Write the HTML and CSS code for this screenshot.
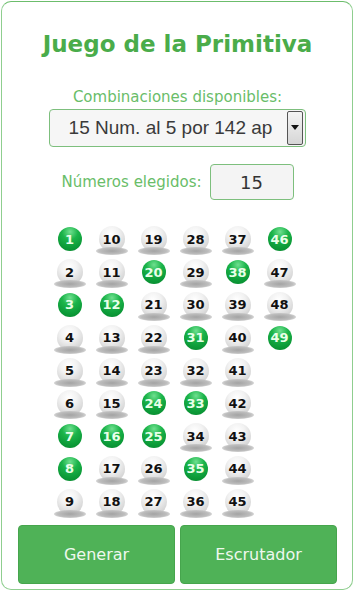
FILE: index.html
```html
<!DOCTYPE html>
<html lang="es">
<head>
    <meta charset="UTF-8">
    <meta name="viewport" content="width=device-width, initial-scale=1.0">
    <title>Juego de la Primitiva</title>
    <link rel="stylesheet" href="styles.css">
</head>
<body>
    <div class="card">
        <h1>Juego de la Primitiva</h1>
        <div class="label">Combinaciones disponibles:</div>
        <div class="select">
            <span class="select-text">15 Num. al 5 por 142 ap</span>
            <span class="select-arrow"></span>
        </div>
        <div class="chosen">
            <span class="label">Números elegidos:</span>
            <div class="count">15</div>
        </div>
        <div class="balls" id="balls"></div>
        <div class="actions">
            <button>Generar</button>
            <button>Escrutador</button>
        </div>
    </div>

    <script>
        const picked = [1, 3, 7, 8, 12, 16, 20, 24, 25, 31, 33, 35, 38, 46, 49];
        const box = document.getElementById('balls');
        let html = '';
        for (let n = 1; n <= 49; n++) {
            const cls = picked.includes(n) ? 'ball on' : 'ball';
            html += `<div class="cell"><span class="${cls}">${n}</span></div>`;
        }
        box.innerHTML = html;
    </script>
</body>
</html>
```

FILE: styles.css
```css
body {
    margin: 0;
    padding: 0;
    background-color: #fff;
    font-family: "DejaVu Sans", Verdana, sans-serif;
}
.card {
    margin: 1px;
    width: 352px;
    height: 589px;
    box-sizing: border-box;
    border: 1px solid #8fce8f;
    border-top-color: #6cbd6c;
    border-radius: 10px;
    padding: 28px 15px 0 16px;
    display: flex;
    flex-direction: column;
    align-items: center;
}
h1 {
    margin: 0;
    font-size: 23px;
    line-height: 28px;
    color: #4aac4a;
    font-weight: bold;
}
.label {
    color: #69bd69;
    font-size: 15px;
    line-height: 18px;
}
.card > .label {
    margin-top: 30px;
}
.select {
    margin-top: 3px;
    width: 257px;
    height: 38px;
    box-sizing: border-box;
    border: 1px solid #7dbf7d;
    border-radius: 4px;
    background-color: #f6f6f6;
    display: flex;
    align-items: center;
    padding: 0 2px 0 0;
}
.select-text {
    flex: 1;
    text-align: center;
    font-family: "Liberation Sans", Arial, sans-serif;
    font-size: 19px;
    color: #3a3a3a;
    padding-left: 4px;
}
.select-arrow {
    width: 16px;
    height: 34px;
    box-sizing: border-box;
    border: 1px solid #555;
    border-radius: 2px;
    background: linear-gradient(#f4f4f4, #d6d6d6);
    position: relative;
}
.select-arrow::after {
    content: "";
    position: absolute;
    left: 3px;
    top: 13px;
    border-left: 4px solid transparent;
    border-right: 4px solid transparent;
    border-top: 5px solid #111;
}
.chosen {
    margin-top: 17px;
    display: flex;
    align-items: center;
    gap: 8px;
}
.count {
    width: 84px;
    height: 36px;
    box-sizing: border-box;
    border: 1px solid #7dbf7d;
    border-radius: 4px;
    background-color: #f4f4f4;
    display: flex;
    align-items: center;
    justify-content: center;
    font-size: 18px;
    color: #333;
}
.balls {
    margin-top: 23px;
    display: grid;
    grid-auto-flow: column;
    grid-template-rows: repeat(9, 32.8px);
    grid-template-columns: repeat(6, 42px);
    margin-left: -6px;
}
.cell {
    display: flex;
    align-items: center;
    justify-content: center;
}
.ball {
    position: relative;
    width: 26px;
    height: 26px;
    border-radius: 50%;
    display: flex;
    align-items: center;
    justify-content: center;
    font-size: 13px;
    font-weight: bold;
    color: #111;
    background: radial-gradient(circle at 45% 30%, #ffffff 0%, #f2f2f2 35%, #d4d4d4 75%, #b5b5b5 100%);
    z-index: 1;
}
.ball::before {
    content: "";
    position: absolute;
    left: -3px;
    right: -3px;
    bottom: -3px;
    height: 8px;
    border-radius: 50%;
    background: radial-gradient(ellipse at center, #a3a3a3 0%, #bdbdbd 55%, rgba(210, 210, 210, 0) 100%);
    z-index: -1;
}
.ball.on {
    width: 24px;
    height: 24px;
    color: #e9ffe9;
    background: radial-gradient(circle at 50% 20%, #6fe08f 0%, #1bb44a 35%, #0c9b38 70%, #07842d 100%);
}
.ball.on::before {
    display: none;
}
.actions {
    margin-top: auto;
    margin-bottom: 5px;
    align-self: stretch;
    display: flex;
    gap: 5px;
}
.actions button {
    flex: 1;
    height: 59px;
    background-color: #4fb257;
    border: 1px solid #46a54d;
    border-radius: 4px;
    color: #eef8ee;
    font-family: "DejaVu Sans", Verdana, sans-serif;
    font-size: 16px;
    cursor: pointer;
}
```
